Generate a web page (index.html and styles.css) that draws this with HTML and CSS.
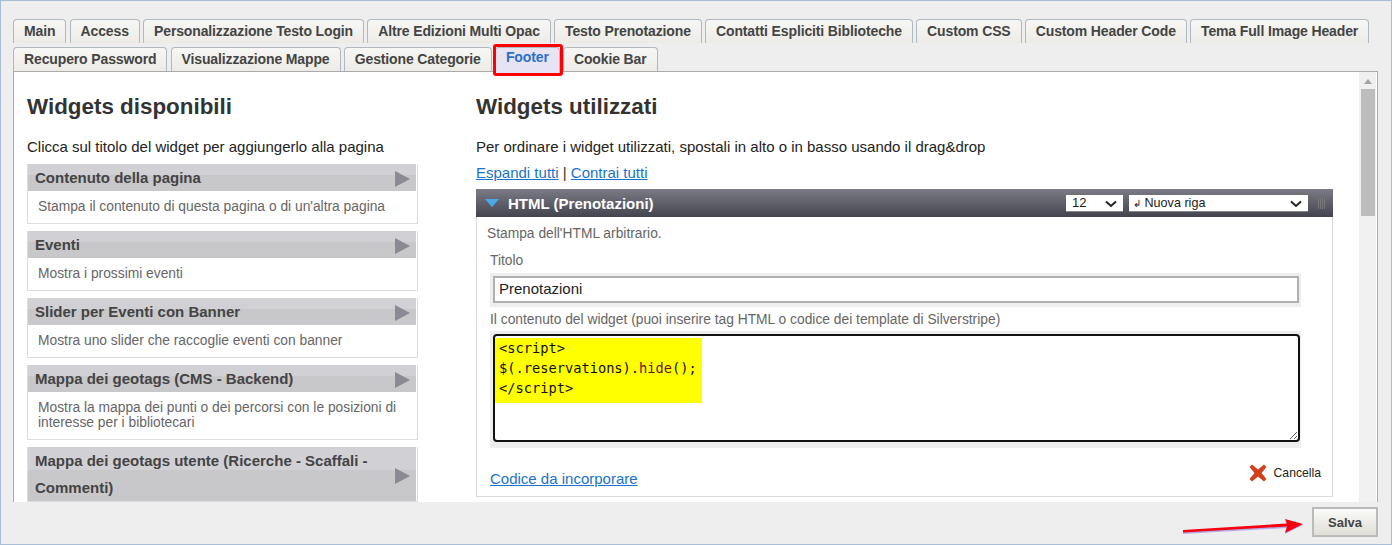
FILE: index.html
```html
<!DOCTYPE html>
<html lang="it">
<head>
<meta charset="utf-8">
<title>Footer</title>
<link rel="stylesheet" href="styles.css">
</head>
<body>
<div class="app">
  <div class="tabs">
    <a class="tab">Main</a>
    <a class="tab">Access</a>
    <a class="tab">Personalizzazione Testo Login</a>
    <a class="tab">Altre Edizioni Multi Opac</a>
    <a class="tab">Testo Prenotazione</a>
    <a class="tab">Contatti Espliciti Biblioteche</a>
    <a class="tab">Custom CSS</a>
    <a class="tab">Custom Header Code</a>
    <a class="tab">Tema Full Image Header</a>
    <a class="tab">Recupero Password</a>
    <a class="tab">Visualizzazione Mappe</a>
    <a class="tab">Gestione Categorie</a>
    <a class="tab tab-active">Footer</a>
    <a class="tab">Cookie Bar</a>
  </div>
  <div class="panel">
    <div class="content">
      <section class="col-left">
        <h2>Widgets disponibili</h2>
        <p class="intro">Clicca sul titolo del widget per aggiungerlo alla pagina</p>
        <div class="widget">
          <div class="widget-head"><span>Contenuto della pagina</span><svg class="play" viewBox="0 0 15 16"><path d="M0 0L15 8L0 16Z"/></svg></div>
          <p class="widget-desc">Stampa il contenuto di questa pagina o di un'altra pagina</p>
        </div>
        <div class="widget">
          <div class="widget-head"><span>Eventi</span><svg class="play" viewBox="0 0 15 16"><path d="M0 0L15 8L0 16Z"/></svg></div>
          <p class="widget-desc">Mostra i prossimi eventi</p>
        </div>
        <div class="widget">
          <div class="widget-head"><span>Slider per Eventi con Banner</span><svg class="play" viewBox="0 0 15 16"><path d="M0 0L15 8L0 16Z"/></svg></div>
          <p class="widget-desc">Mostra uno slider che raccoglie eventi con banner</p>
        </div>
        <div class="widget">
          <div class="widget-head"><span>Mappa dei geotags (CMS - Backend)</span><svg class="play" viewBox="0 0 15 16"><path d="M0 0L15 8L0 16Z"/></svg></div>
          <p class="widget-desc">Mostra la mappa dei punti o dei percorsi con le posizioni di interesse per i bibliotecari</p>
        </div>
        <div class="widget">
          <div class="widget-head"><span>Mappa dei geotags utente (Ricerche - Scaffali - Commenti)</span><svg class="play" viewBox="0 0 15 16"><path d="M0 0L15 8L0 16Z"/></svg></div>
        </div>
      </section>
      <section class="col-right">
        <h2>Widgets utilizzati</h2>
        <p class="intro">Per ordinare i widget utilizzati, spostali in alto o in basso usando il drag&amp;drop</p>
        <p class="toggles"><a class="link">Espandi tutti</a> | <a class="link">Contrai tutti</a></p>
        <div class="used">
          <div class="used-head">
            <svg class="caret" viewBox="0 0 14 8"><path d="M0 0H14L7 8Z"/></svg>
            <span class="used-title">HTML (Prenotazioni)</span>
            <span class="sel sel-num">12<svg class="chev" viewBox="0 0 12 8"><path d="M1 1.5L6 6L11 1.5"/></svg></span>
            <span class="sel sel-row"><small>↲</small> Nuova riga<svg class="chev" viewBox="0 0 12 8"><path d="M1 1.5L6 6L11 1.5"/></svg></span>
            <span class="grip"></span>
          </div>
          <div class="used-body">
            <p class="used-desc">Stampa dell'HTML arbitrario.</p>
            <label class="field-label">Titolo</label>
            <div class="input-wrap"><div class="input">Prenotazioni</div></div>
            <label class="field-label label-2">Il contenuto del widget (puoi inserire tag HTML o codice dei template di Silverstripe)</label>
            <div class="area-wrap">
              <div class="area"><pre class="code">&lt;script&gt;
$(.reservations).<span class="fn">hide</span>();
&lt;/script&gt;</pre></div>
            </div>
            <div class="used-foot">
              <a class="link embed">Codice da incorporare</a>
              <span class="cancel">
                <svg class="x" viewBox="0 0 18 18"><path d="M3 0.5L9 5.5L15 0.5L17.5 3L12.5 9L17.5 15L15 17.5L9 12.5L3 17.5L0.5 15L5.5 9L0.5 3Z"/></svg>
                Cancella
              </span>
            </div>
          </div>
        </div>
      </section>
    </div>
    <div class="scrollbar">
      <svg class="scroll-up" viewBox="0 0 8 5"><path d="M4 0L8 5H0Z"/></svg>
      <div class="thumb"></div>
    </div>
  </div>
  <div class="footer"><button class="save">Salva</button></div>
  <div class="mark-box"></div>
  <svg class="mark-arrow" viewBox="0 0 122 20"><path class="arrow-shadow" d="M0 15.5L104 9L102 5L120 9L102 18L104 12L0 18Z"/><path class="arrow-red" d="M0 14L104 7.5L102 3L120 8L102 17L104 10.5L0 16.5Z"/></svg>
</div>
</body>
</html>
```
FILE: styles.css
```css
* { box-sizing: border-box; }
html, body { margin: 0; padding: 0; }
body { font-family: "Liberation Sans", Arial, sans-serif; color: #222; }
.app {
  position: relative;
  width: 1392px;
  height: 545px;
  background: #eeeeee;
  border: 1px solid #a9bdd4;
  overflow: hidden;
  padding: 18px 13px 0 12px;
  display: flex;
  flex-direction: column;
}
.tabs { display: flex; flex-wrap: wrap; column-gap: 3.2px; row-gap: 4px; height: 52px; align-content: flex-start; }
.tab {
  height: 24px;
  padding: 3px 10px 0;
  font-size: 14px;
  letter-spacing: -0.13px;
  line-height: 16px;
  font-weight: bold;
  color: #444;
  background: linear-gradient(#f7f7f5, #ecebe6);
  border: 1px solid #b0b8c0;
  border-bottom: none;
  border-radius: 4px 4px 0 0;
}
.tab-active { background: #e6e4f4; color: #2a70c4; height: 26px; padding-top: 1px; position: relative; z-index: 1; }
.panel {
  display: flex;
  height: 431px;
  background: #fff;
  border: 1px solid #aaa;
  border-bottom: none;
}
.content { flex: 1; display: flex; overflow: hidden; padding-left: 13px; min-width: 0; }
.col-left { width: 391px; flex: none; margin-right: 58px; }
.col-right { width: 857px; flex: none; }
h2 { margin: 22px 0 0; font-size: 22.4px; line-height: 26px; font-weight: bold; color: #333; }
.intro { margin: 17px 0 0; font-size: 15px; line-height: 20px; color: #222; }
.widget { margin-bottom: 7px; border: 1px solid #ddd; border-top: none; background: #fff; }
.col-left .intro + .widget { margin-top: 7px; }
.widget-head {
  display: flex;
  align-items: center;
  margin-right: 1px;
  min-height: 27px;
  padding: 0 6px 0 7px;
  font-size: 15px;
  line-height: 27px;
  font-weight: bold;
  color: #444;
  background: linear-gradient(#d1d1d5 0, #d1d1d5 42%, #c8c8ca 42%);
}
.widget-head span { display: block; flex: 1; }
.play { width: 15px; height: 16px; flex: none; fill: #8a8a94; margin-top: 3px; }
.widget-desc { margin: 0; padding: 8px 18px 9px 10px; font-size: 13.8px; line-height: 15px; color: #666; }
.toggles { margin: 6px 0 0; font-size: 15px; line-height: 20px; color: #333; }
.link { color: #1a73c8; text-decoration: underline; }
.used { margin-top: 6px; }
.used-head {
  display: flex;
  align-items: center;
  height: 28px;
  padding-left: 9px;
  background: linear-gradient(#7b7b86, #44444f);
}
.caret { width: 14px; height: 8px; fill: #4aa8ea; flex: none; }
.used-title { flex: 1; margin-left: 9px; font-size: 15px; font-weight: bold; color: #fff; }
.sel {
  position: relative;
  height: 17px;
  background: #fff;
  font-size: 12.6px;
  line-height: 16px;
  color: #222;
  padding-left: 4px;
  border-bottom: 1px solid #888;
}
.sel small { font-size: 10px; }
.sel-num { width: 57px; font-size: 13px; padding-left: 6px; }
.sel-row { width: 179px; margin-left: 6px; }
.chev { position: absolute; right: 6px; top: 5px; width: 12px; height: 8px; fill: none; stroke: #222; stroke-width: 2; }
.grip {
  width: 7px;
  height: 11px;
  margin: 0 8px 0 10px;
  background: repeating-linear-gradient(90deg, #777 0 1px, transparent 1px 2px);
}
.used-body { height: 280px; padding: 9px 0 0 10px; border: 1px solid #ddd; border-top: none; }
.used-desc { margin: 0; font-size: 13.8px; line-height: 16px; color: #666; }
.field-label { display: block; margin: 11px 0 0 3px; font-size: 13.8px; line-height: 16px; color: #666; }
.label-2 { margin-top: 5px; }
.input-wrap { margin: 4px 31px 0 3px; height: 34px; padding: 3px 2px 0 3px; background: #eee; }
.input { height: 27px; border: 2px solid #b0b0b0; background: #fff; padding-left: 4px; font-size: 15px; line-height: 21px; color: #222; }
.area-wrap { margin: 3px 31px 0 3px; height: 117px; padding: 3px 1px 0 3px; background: #eee; }
.area {
  height: 108px;
  border: 2px solid #111;
  border-radius: 4px;
  background: #fff;
  overflow: auto;
  resize: both;
  padding: 2px 0 0 0;
}
.code {
  margin: 0;
  width: 207px;
  height: 65px;
  padding: 0 0 0 4px;
  background: #ff0;
  font-family: "DejaVu Sans Mono", monospace;
  font-size: 13.7px;
  line-height: 20px;
  color: #111;
}
.fn { color: #6d1515; }
.used-foot { display: flex; justify-content: space-between; align-items: center; height: 38px; margin: 8px 11px 0 3px; }
.embed { font-size: 15px; line-height: 18px; margin-top: 8px; }
.cancel { display: flex; align-items: center; gap: 7px; font-size: 12.2px; color: #222; margin-bottom: 4px; }
.x { width: 18px; height: 18px; fill: #d2401c; }
.scrollbar { width: 17px; flex: none; margin-right: 1px; background: #f0f0f0; display: flex; flex-direction: column; align-items: center; }
.scroll-up { width: 8px; height: 5px; margin-top: 7px; fill: #a3a3a3; }
.thumb { width: 14px; height: 127px; margin-top: 5px; background: #bdbdbd; }
.footer { flex: 1; display: flex; justify-content: flex-end; align-items: flex-start; padding-top: 5px; }
.save {
  width: 66px;
  height: 30px;
  margin: 0;
  border: 2px solid #bbb;
  background: linear-gradient(#fbfbf9, #e0ded6);
  font-family: "Liberation Sans", Arial, sans-serif;
  font-size: 13px;
  font-weight: bold;
  color: #444;
}
.mark-box { position: absolute; left: 492px; top: 43px; width: 70px; height: 32px; border: 3px solid #f00; border-radius: 3px; z-index: 2; pointer-events: none; }
.mark-arrow { position: absolute; left: 1182px; top: 515px; width: 122px; height: 20px; }
.arrow-red { fill: #f5000f; }
.arrow-shadow { fill: #7a6ae0; opacity: .5; }
```
